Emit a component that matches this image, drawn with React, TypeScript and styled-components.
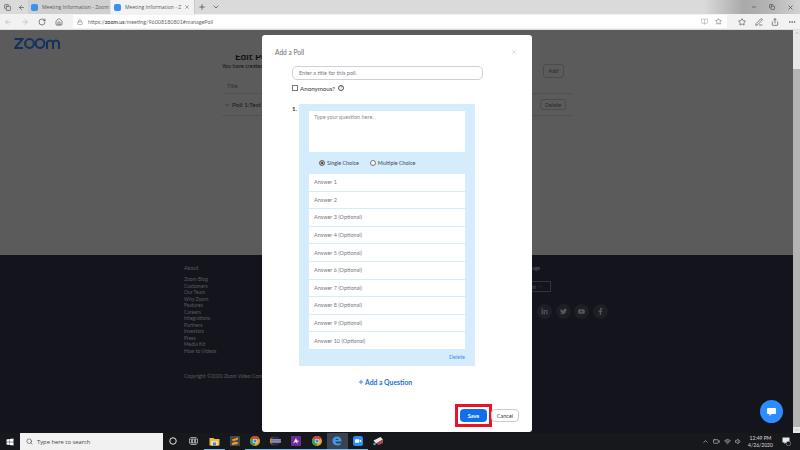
import styled, { createGlobalStyle } from 'styled-components';
import { ArrowLeft, ArrowRight, RotateCw, Home, Lock, Plus, ChevronDown, ChevronUp, X, Star, BookOpen, PenLine, Share, MoreHorizontal, Search, Minus, Copy, Wifi, Volume1, Battery } from 'lucide-react';
import { FaLinkedinIn, FaTwitter, FaYoutube, FaFacebookF, FaWindows } from 'react-icons/fa';

const GlobalStyle = createGlobalStyle`
  html, body { margin: 0; padding: 0; }
  body { width: 800px; height: 450px; overflow: hidden; font-family: Lato, "Liberation Sans", sans-serif; }
  * { box-sizing: border-box; }
`;

const Screen = styled.div`
  width: 800px;
  height: 450px;
  display: flex;
  flex-direction: column;
  background: #14151c;
`;

const TabStrip = styled.div`
  height: 14px;
  display: flex;
  align-items: stretch;
  background: linear-gradient(90deg, #dadada 0%, #dadada 88%, #a9a9a9 93%, #b4b4b4 96%, #d2d2d2 100%);
`;

const StripIcon = styled.div`
  width: 14px;
  flex: none;
  display: flex;
  align-items: center;
  justify-content: center;
  color: #3a3a3a;
`;

const Tab = styled.div<{ $active?: boolean }>`
  width: ${(p) => (p.$active ? '84px' : '83px')};
  flex: none;
  display: flex;
  align-items: center;
  padding: 0 ${(p) => (p.$active ? '4px' : '1px')} 0 3px;
  background: ${(p) => (p.$active ? '#f2f2f2' : '#d0d0d0')};
  border-right: 1px solid ${(p) => (p.$active ? '#c8c8c8' : '#e6e6e6')};
  font-family: "Open Sans", "Liberation Sans", sans-serif;
  font-size: 5.1px;
  color: #5c5c5c;
  white-space: nowrap;
`;

const TabDot = styled.div`
  width: 7px;
  height: 7px;
  flex: none;
  margin-right: 4px;
  border-radius: 2px;
  background: #3d8ff0;
`;

const TabLabel = styled.span`
  flex: 1;
`;

const WindowControls = styled.div`
  margin-left: auto;
  display: flex;
  align-items: center;
  gap: 12px;
  padding-right: 6px;
  color: #333;
`;

const Toolbar = styled.div`
  height: 16px;
  display: flex;
  align-items: center;
  background: #f2f2f2;
  border-bottom: 1px solid #dcdcdc;
  color: #4a4a4a;
`;

const NavButtons = styled.div`
  width: 73px;
  flex: none;
  display: flex;
  align-items: center;
  gap: 9px;
  padding-left: 4px;
`;

const AddressBar = styled.div`
  width: 654px;
  flex: none;
  height: 13px;
  display: flex;
  align-items: center;
  padding-left: 4px;
  gap: 5px;
  background: #fff;
  font-size: 5.4px;
  color: #6a6a6a;
`;

const UrlHost = styled.span`
  color: #222;
`;

const AddressRight = styled.div`
  margin-left: auto;
  display: flex;
  align-items: center;
  gap: 7px;
  padding-right: 5px;
`;

const ToolActions = styled.div`
  flex: 1;
  display: flex;
  align-items: center;
  gap: 8.5px;
  padding-left: 11px;
`;

const Viewport = styled.div`
  position: relative;
  height: 403px;
  display: flex;
  overflow: hidden;
`;

const Page = styled.div`
  flex: 1;
  display: flex;
  flex-direction: column;
`;

const Main = styled.div`
  height: 225px;
  background: #5b5b5b;
  display: flex;
  flex-direction: column;
  padding: 8px 0 0 14px;
`;

const LogoMark = styled.svg`
  display: block;
  flex: none;
`;

const EditArea = styled.div`
  margin: 6px 0 0 208px;
  width: 350px;
  display: flex;
  flex-direction: column;
`;

const EditTitle = styled.div`
  margin-left: 13px;
  height: 6px;
  font-size: 10px;
  line-height: 3px;
  font-weight: 700;
  color: #111;
  overflow: hidden;
`;

const IntroRow = styled.div`
  height: 17px;
  margin-top: 1px;
  display: flex;
  justify-content: space-between;
  align-items: flex-start;
  padding-right: 8px;
  font-size: 5.5px;
  line-height: 8px;
  color: #111;
`;

const ListHead = styled.div`
  height: 15px;
  display: flex;
  align-items: center;
  padding-left: 5px;
  font-size: 5.5px;
  color: #2f2f2f;
  border-bottom: 1px solid #525252;
`;

const GhostButton = styled.div<{ $wide?: boolean }>`
  width: ${(p) => (p.$wide ? '26px' : '21px')};
  height: ${(p) => (p.$wide ? '11px' : '14px')};
  margin-top: ${(p) => (p.$wide ? '0' : '2px')};
  border: 1px solid #4b4b4b;
  border-radius: 3px;
  display: flex;
  align-items: center;
  justify-content: center;
  font-size: 5.5px;
  color: #2a2a2a;
`;

const PollRow = styled.div`
  display: flex;
  justify-content: space-between;
  align-items: center;
  height: 22px;
  padding: 0 6px 0 2px;
  font-size: 6.5px;
  color: #1a1a1a;
  border-bottom: 1px solid #525252;
`;

const PollName = styled.div`
  display: flex;
  align-items: center;
  gap: 2px;
`;

const Footer = styled.div`
  flex: 1;
  background: #14151c;
  display: flex;
  padding: 10px 0 0 184px;
  color: #5a5b61;
  font-size: 5px;
`;

const FooterColumn = styled.div`
  width: 334px;
  flex: none;
  display: flex;
  flex-direction: column;
`;

const FooterHead = styled.div`
  margin-bottom: 4px;
  line-height: 7px;
  font-size: 5.3px;
`;

const FooterLink = styled.div`
  line-height: 6.55px;
`;

const Copyright = styled.div`
  margin-top: 18px;
  line-height: 7px;
  white-space: nowrap;
`;

const FooterSide = styled.div`
  display: flex;
  flex-direction: column;
`;

const LangSelect = styled.div`
  margin-top: 5px;
  width: 33px;
  height: 11px;
  border: 1px solid #33343a;
  display: flex;
  align-items: center;
  justify-content: flex-end;
  padding-right: 7px;
  gap: 2px;
`;

const Socials = styled.div`
  margin: 12px 0 0 19px;
  display: flex;
  gap: 3.5px;
`;

const SocialIcon = styled.div`
  width: 15px;
  height: 15px;
  border-radius: 50%;
  background: #1e1f26;
  color: #55565b;
  display: flex;
  align-items: center;
  justify-content: center;
`;

const Scrollbar = styled.div`
  width: 7px;
  flex: none;
  display: flex;
  flex-direction: column;
  background: #e8e8e8;
`;

const ScrollArrow = styled.div`
  height: 6px;
  flex: none;
  display: flex;
  align-items: center;
  justify-content: center;
  color: #9a9a9a;
`;

const ScrollTrack = styled.div`
  flex: 1;
  display: flex;
  flex-direction: column;
  justify-content: flex-end;
`;

const ScrollThumb = styled.div`
  height: 358px;
  background: #b4b4b4;
`;

const Modal = styled.div`
  position: absolute;
  left: 262px;
  top: 5px;
  width: 270px;
  height: 397px;
  background: #fff;
  border-radius: 3px;
  display: flex;
  flex-direction: column;
`;

const ModalHead = styled.div`
  height: 31px;
  flex: none;
  display: flex;
  align-items: center;
  justify-content: space-between;
  padding: 3px 15px 0 13px;
  font-size: 6.6px;
  color: #6e6e6e;
`;

const ModalBody = styled.div`
  flex: 1;
  display: flex;
  flex-direction: column;
  padding-left: 30px;
`;

const TitleInput = styled.div`
  width: 191px;
  height: 14px;
  flex: none;
  display: flex;
  align-items: center;
  padding-left: 6px;
  border: 1px solid #cfcfd6;
  border-radius: 5px;
  font-size: 5.5px;
  color: #77777f;
`;

const AnonRow = styled.div`
  margin-top: 4px;
  height: 8px;
  display: flex;
  align-items: center;
  gap: 2px;
  font-size: 6.2px;
  color: #333;
`;

const CheckBox = styled.div`
  width: 6px;
  height: 6px;
  border: 1px solid #777;
  background: #fff;
`;

const HelpMark = styled.div`
  width: 6px;
  height: 6px;
  margin-left: 1px;
  border: 1px solid #555;
  border-radius: 50%;
  font-size: 4px;
  line-height: 4px;
  text-align: center;
`;

const QuestionRow = styled.div`
  margin-top: 12px;
  display: flex;
`;

const QuestionNumber = styled.div`
  width: 7px;
  flex: none;
  padding-top: 1px;
  font-size: 6px;
  line-height: 8px;
  font-weight: 700;
  color: #333;
`;

const QuestionPanel = styled.div`
  width: 176px;
  height: 262px;
  display: flex;
  flex-direction: column;
  padding: 7px 10px 0;
  background: #d5ecfd;
`;

const QuestionBox = styled.div`
  height: 41px;
  flex: none;
  padding: 2px 5px;
  background: #fff;
  font-size: 5.5px;
  line-height: 8px;
  color: #8a8a90;
`;

const ChoiceRow = styled.div`
  height: 22px;
  flex: none;
  display: flex;
  align-items: center;
  padding-left: 10px;
  gap: 11px;
  font-size: 5.4px;
  color: #3c4a5a;
`;

const Choice = styled.div`
  display: flex;
  align-items: center;
  gap: 2px;
`;

const Radio = styled.div<{ $checked?: boolean }>`
  width: 6px;
  height: 6px;
  border-radius: 50%;
  border: 1px solid #777;
  background: ${(p) => (p.$checked ? '#222' : '#fff')};
  box-shadow: ${(p) => (p.$checked ? 'inset 0 0 0 1px #ddd' : 'none')};
`;

const AnswerList = styled.div`
  flex: none;
  display: flex;
  flex-direction: column;
  gap: 1px;
`;

const Answer = styled.div`
  height: 16.6px;
  display: flex;
  align-items: center;
  padding-left: 5px;
  background: #fff;
  font-size: 5.5px;
  color: #77777f;
`;

const DeleteLink = styled.div`
  margin-top: 5px;
  text-align: right;
  font-size: 5.5px;
  line-height: 7px;
  color: #3d8ff0;
`;

const AddQuestion = styled.div`
  margin: 11px 0 0 66px;
  height: 9px;
  display: flex;
  align-items: center;
  gap: 1px;
  font-size: 6.8px;
  font-weight: 700;
  color: #2170d8;
`;

const ModalFoot = styled.div`
  height: 28px;
  flex: none;
  display: flex;
  justify-content: flex-end;
  align-items: flex-start;
  padding-right: 13px;
`;

const SaveOutline = styled.div`
  width: 37px;
  height: 23px;
  border: 3px solid #e8132b;
  display: flex;
  align-items: center;
  justify-content: center;
`;

const SaveButton = styled.div`
  width: 27px;
  height: 13px;
  background: #0e71eb;
  border-radius: 4px;
  color: #fff;
  font-size: 5.5px;
  font-weight: 700;
  display: flex;
  align-items: center;
  justify-content: center;
`;

const CancelButton = styled.div`
  margin: 5px 0 0 -1px;
  width: 28px;
  height: 13px;
  border: 1px solid #ccc;
  border-radius: 4px;
  font-size: 5.5px;
  color: #444;
  display: flex;
  align-items: center;
  justify-content: center;
`;

const ChatBubble = styled.div`
  position: absolute;
  left: 760px;
  top: 370px;
  width: 23px;
  height: 23px;
  border-radius: 50%;
  background: #2d8cff;
  display: flex;
  align-items: center;
  justify-content: center;
`;

const Taskbar = styled.div`
  height: 17px;
  display: flex;
  align-items: center;
  background: #17181c;
  color: #ddd;
`;

const StartButton = styled.div`
  width: 20px;
  flex: none;
  display: flex;
  justify-content: center;
  color: #fff;
`;

const SearchBox = styled.div`
  width: 143px;
  flex: none;
  height: 17px;
  display: flex;
  align-items: center;
  gap: 4px;
  padding-left: 6px;
  background: #f1f1f1;
  color: #444;
  font-family: "Open Sans", "Liberation Sans", sans-serif;
  font-size: 5.8px;
`;

const TaskItems = styled.div`
  display: flex;
  align-items: stretch;
  height: 17px;
`;

const TaskItem = styled.div<{ $active?: boolean; $open?: boolean }>`
  width: 20.5px;
  display: flex;
  align-items: center;
  justify-content: center;
  background: ${(p) => (p.$active ? '#3a4450' : 'transparent')};
  border-bottom: 1px solid ${(p) => (p.$open ? '#7db7e8' : 'transparent')};
`;

const Tray = styled.div`
  margin-left: auto;
  display: flex;
  align-items: center;
  gap: 4px;
  padding-right: 9px;
`;

const Clock = styled.div`
  width: 25px;
  margin: 0 5px 0 2px;
  font-size: 5px;
  line-height: 7px;
  text-align: center;
  color: #ddd;
`;

const answers = [
  'Answer 1',
  'Answer 2',
  'Answer 3 (Optional)',
  'Answer 4 (Optional)',
  'Answer 5 (Optional)',
  'Answer 6 (Optional)',
  'Answer 7 (Optional)',
  'Answer 8 (Optional)',
  'Answer 9 (Optional)',
  'Answer 10 (Optional)',
];

const footerLinks = [
  'Zoom Blog',
  'Customers',
  'Our Team',
  'Why Zoom',
  'Features',
  'Careers',
  'Integrations',
  'Partners',
  'Investors',
  'Press',
  'Media Kit',
  'How to Videos',
];

const ChromeIcon = () => (
  <svg width="10" height="10" viewBox="0 0 20 20">
    <circle cx="10" cy="10" r="10" fill="#e0a92c" />
    <path d="M10 10 L1.3 5 A10 10 0 0 1 18.7 5 Z" fill="#d8452f" />
    <path d="M10 10 L1.3 5 A10 10 0 0 0 10 20 Z" fill="#3f9b4f" />
    <circle cx="10" cy="10" r="4.6" fill="#fff" />
    <circle cx="10" cy="10" r="3.4" fill="#3f82dc" />
  </svg>
);

const FolderIcon = () => (
  <svg width="11" height="9" viewBox="0 0 22 18">
    <path d="M1 2 H9 L11 4 H21 V17 H1 Z" fill="#e9bd49" />
    <rect x="4" y="8" width="14" height="9" fill="#f7dc87" />
    <rect x="8" y="11" width="6" height="6" fill="#3d8ed0" />
  </svg>
);

const SublimeIcon = () => (
  <svg width="10" height="10" viewBox="0 0 20 20">
    <rect width="20" height="20" rx="2" fill="#47484c" />
    <path d="M4 7 L16 3 V7 L8 10 L16 13 V16 L4 18 V14 L11 11 L4 9 Z" fill="#f09a22" />
  </svg>
);

const EclipseIcon = () => (
  <svg width="11" height="10" viewBox="0 0 22 20">
    <circle cx="11" cy="10" r="9.5" fill="#2c2558" />
    <rect x="0" y="7" width="22" height="1.8" fill="#f4f4f8" />
    <rect x="0" y="11" width="22" height="1.8" fill="#f4f4f8" />
    <path d="M5 2 A9.5 9.5 0 0 0 5 18" stroke="#e39a2e" strokeWidth="1.6" fill="none" />
  </svg>
);

const PurpleAppIcon = () => (
  <svg width="10" height="10" viewBox="0 0 20 20">
    <rect width="20" height="20" rx="2" fill="#6d2c91" />
    <path d="M4 15 L10 4 L12 9 L17 10 L12 12 L14 16 L9 12 Z" fill="#f0e6f6" />
  </svg>
);

const EdgeIcon = () => (
  <svg width="10" height="10" viewBox="0 0 20 20">
    <path
      d="M1 10 C1 4 5 1 10 1 C16 1 19 5 19 11 H7 C7 15 12 16.5 17 14 V18 C11 20 1 19 1 10 Z M7 8 H13 C13 4.5 8 4.5 7 8 Z"
      fill="#3d9be8"
      fillRule="evenodd"
    />
  </svg>
);

const ZoomAppIcon = () => (
  <svg width="10" height="10" viewBox="0 0 20 20">
    <rect width="20" height="20" rx="5" fill="#2d8cff" />
    <rect x="4" y="6.5" width="8.5" height="7" rx="1.5" fill="#fff" />
    <path d="M13.5 9 L16.5 7 V13 L13.5 11 Z" fill="#fff" />
  </svg>
);

const SnipIcon = () => (
  <svg width="12" height="10" viewBox="0 0 24 20">
    <path d="M3 9 L17 2 L22 7 L8 15 Z" fill="#e4e4ea" />
    <path d="M8 15 L14 18 L22 14 L22 7 Z" fill="#b8434a" />
    <circle cx="5" cy="16" r="2.5" fill="#5f9ed8" />
  </svg>
);

const TaskViewIcon = () => (
  <svg width="9" height="8" viewBox="0 0 18 16" fill="none" stroke="#c8c8c8" strokeWidth="1.5">
    <rect x="1" y="4" width="4" height="8" />
    <rect x="7" y="4" width="4" height="8" />
    <rect x="13" y="4" width="4" height="8" />
    <path d="M3 1 H15 M3 15 H15" />
  </svg>
);

const CortanaIcon = () => (
  <svg width="8" height="8" viewBox="0 0 16 16" fill="none" stroke="#e4e4e4" strokeWidth="2">
    <circle cx="8" cy="8" r="6.5" />
  </svg>
);

const App = () => {
  return (
    <Screen>
      <GlobalStyle />
      <TabStrip>
        <StripIcon><Copy size={7} /></StripIcon>
        <StripIcon><ArrowLeft size={7} /></StripIcon>
        <Tab><TabDot /><TabLabel>Meeting Information - Zoom</TabLabel></Tab>
        <Tab $active><TabDot /><TabLabel>Meeting Information - Z</TabLabel><X size={6} /></Tab>
        <StripIcon><Plus size={8} /></StripIcon>
        <StripIcon><ChevronDown size={8} /></StripIcon>
        <WindowControls>
          <Minus size={6} />
          <Copy size={6} />
          <X size={7} />
        </WindowControls>
      </TabStrip>
      <Toolbar>
        <NavButtons>
          <ArrowLeft size={8} color="#b5b5b5" />
          <ArrowRight size={8} color="#b5b5b5" />
          <RotateCw size={8} />
          <Home size={8} />
        </NavButtons>
        <AddressBar>
          <Lock size={6} color="#777" />
          <span>https://<UrlHost>zoom.us</UrlHost>/meeting/96008180801#managePoll</span>
          <AddressRight>
            <BookOpen size={7} color="#aaa" />
            <Star size={7} />
          </AddressRight>
        </AddressBar>
        <ToolActions>
          <Star size={8} />
          <PenLine size={8} />
          <Share size={8} />
          <MoreHorizontal size={8} />
        </ToolActions>
      </Toolbar>
      <Viewport>
        <Page>
          <Main>
            <LogoMark width="46" height="11" viewBox="0 0 46 11" fill="none" stroke="#12315f" strokeWidth="2">
              <path d="M0.5 1 H8.5 L0.8 10 H9" />
              <circle cx="15.5" cy="5.5" r="4.4" />
              <circle cx="26" cy="5.5" r="4.4" />
              <path d="M33 11 V4.5 A3.2 3.2 0 0 1 39 4.5 V11 M39 4.5 A3.2 3.2 0 0 1 45 4.5 V11" />
            </LogoMark>
            <EditArea>
              <EditTitle>Edit Poll</EditTitle>
              <IntroRow>
                <span>You have created 1 poll for this meeting.</span>
                <GhostButton>Add</GhostButton>
              </IntroRow>
              <ListHead>Title</ListHead>
              <PollRow>
                <PollName><ChevronDown size={6} color="#222" />Poll 1:Test</PollName>
                <GhostButton $wide>Delete</GhostButton>
              </PollRow>
            </EditArea>
          </Main>
          <Footer>
            <FooterColumn>
              <FooterHead>About</FooterHead>
              {footerLinks.map((link) => (
                <FooterLink key={link}>{link}</FooterLink>
              ))}
              <Copyright>Copyright ©2020 Zoom Video Communications, Inc.</Copyright>
            </FooterColumn>
            <FooterSide>
              <FooterHead>Language</FooterHead>
              <LangSelect>English <ChevronDown size={5} /></LangSelect>
              <Socials>
                <SocialIcon><FaLinkedinIn size={7} /></SocialIcon>
                <SocialIcon><FaTwitter size={7} /></SocialIcon>
                <SocialIcon><FaYoutube size={7} /></SocialIcon>
                <SocialIcon><FaFacebookF size={7} /></SocialIcon>
              </Socials>
            </FooterSide>
          </Footer>
        </Page>
        <Scrollbar>
          <ScrollArrow><ChevronUp size={6} /></ScrollArrow>
          <ScrollTrack>
            <ScrollThumb />
          </ScrollTrack>
          <ScrollArrow><ChevronDown size={6} /></ScrollArrow>
        </Scrollbar>
        <Modal>
          <ModalHead>
            <span>Add a Poll</span>
            <X size={6} color="#bbb" />
          </ModalHead>
          <ModalBody>
            <TitleInput>Enter a title for this poll.</TitleInput>
            <AnonRow>
              <CheckBox />
              Anonymous?
              <HelpMark>?</HelpMark>
            </AnonRow>
            <QuestionRow>
              <QuestionNumber>1.</QuestionNumber>
              <QuestionPanel>
                <QuestionBox>Type your question here.</QuestionBox>
                <ChoiceRow>
                  <Choice><Radio $checked />Single Choice</Choice>
                  <Choice><Radio />Multiple Choice</Choice>
                </ChoiceRow>
                <AnswerList>
                  {answers.map((answer) => (
                    <Answer key={answer}>{answer}</Answer>
                  ))}
                </AnswerList>
                <DeleteLink>Delete</DeleteLink>
              </QuestionPanel>
            </QuestionRow>
            <AddQuestion><Plus size={6} strokeWidth={4} color="#3d8ff0" />Add a Question</AddQuestion>
          </ModalBody>
          <ModalFoot>
            <SaveOutline><SaveButton>Save</SaveButton></SaveOutline>
            <CancelButton>Cancel</CancelButton>
          </ModalFoot>
        </Modal>
        <ChatBubble>
          <svg width="9" height="8" viewBox="0 0 18 16">
            <path d="M2 0 H16 A2 2 0 0 1 18 2 V10 A2 2 0 0 1 16 12 H9 L5 16 V12 H2 A2 2 0 0 1 0 10 V2 A2 2 0 0 1 2 0 Z" fill="#fff" />
          </svg>
        </ChatBubble>
      </Viewport>
      <Taskbar>
        <StartButton><FaWindows size={8} /></StartButton>
        <SearchBox><Search size={7} />Type here to search</SearchBox>
        <TaskItems>
          <TaskItem><CortanaIcon /></TaskItem>
          <TaskItem><TaskViewIcon /></TaskItem>
          <TaskItem $open><FolderIcon /></TaskItem>
          <TaskItem><SublimeIcon /></TaskItem>
          <TaskItem $open><ChromeIcon /></TaskItem>
          <TaskItem $open><EclipseIcon /></TaskItem>
          <TaskItem $open><PurpleAppIcon /></TaskItem>
          <TaskItem $open><ChromeIcon /></TaskItem>
          <TaskItem $active $open><EdgeIcon /></TaskItem>
          <TaskItem $open><ZoomAppIcon /></TaskItem>
          <TaskItem><SnipIcon /></TaskItem>
        </TaskItems>
        <Tray>
          <ChevronUp size={7} />
          <Battery size={7} />
          <Wifi size={7} />
          <Volume1 size={7} />
          <Clock>12:49 PM<br />4/26/2020</Clock>
          <svg width="9" height="9" viewBox="0 0 18 18">
            <path d="M1 1 H15 V11 H8 L5 14 V11 H1 Z" fill="#e8e8e8" />
            <circle cx="13" cy="13" r="4.5" fill="#17181c" stroke="#bbb" />
          </svg>
        </Tray>
      </Taskbar>
    </Screen>
  );
};

export default App;
